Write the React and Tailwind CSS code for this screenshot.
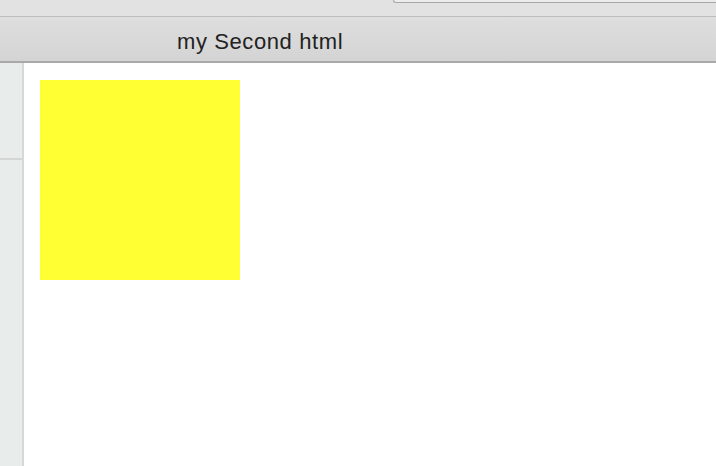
import React from 'react';

const App = () => {
  return (
    <div className="w-[716px] h-[466px] overflow-hidden bg-white flex flex-col font-['Liberation_Sans',Arial,sans-serif]">
      {/* toolbar strip with the address field peeking in */}
      <div className="h-[16px] bg-[#e2e2e2] flex justify-end">
        <div className="w-[323px] h-[3px] bg-[#ececec] border-l border-b border-[#a8a8a8] rounded-bl-[5px]"></div>
      </div>
      <div className="h-[1px] bg-[#bdbdbd]"></div>

      {/* tab bar */}
      <div className="h-[44px] bg-gradient-to-b from-[#dedede] to-[#d4d4d4] flex">
        <div className="pl-[177px] pt-[13px] text-[22px] leading-[24px] tracking-[0.6px] text-[#222222]">
          my Second html
        </div>
      </div>
      <div className="h-[2px] bg-[#a9a9a9]"></div>

      {/* page body */}
      <div className="flex-1 flex">
        <div className="w-[22px] bg-[#e8ecea] flex flex-col">
          <div className="h-[95px]"></div>
          <div className="h-[2px] bg-[#d3d6d4]"></div>
        </div>
        <div className="w-[2px] bg-[#d5d8d6]"></div>
        <div className="flex-1 pl-[16px] pt-[17px]">
          <div className="w-[200px] h-[200px] bg-[#ffff33]"></div>
        </div>
      </div>
    </div>
  );
};

export default App;
